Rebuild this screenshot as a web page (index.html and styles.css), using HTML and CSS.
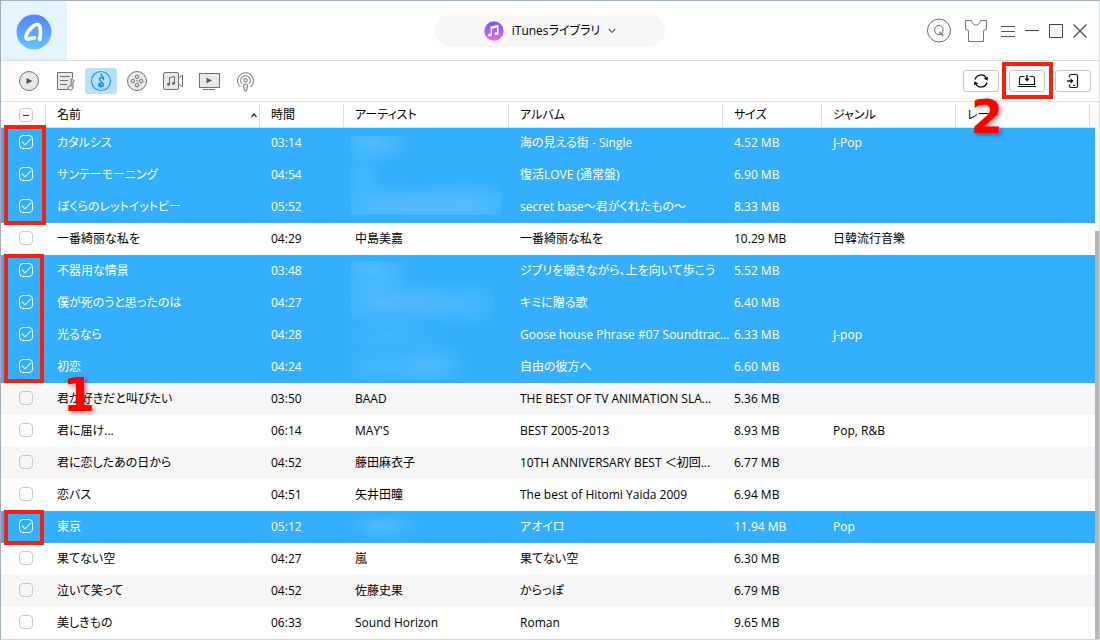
FILE: index.html
```html
<!DOCTYPE html>
<html lang="ja">
<head>
<meta charset="utf-8">
<title>iTunesライブラリ</title>
<link rel="stylesheet" href="styles.css">
</head>
<body>
<div class="app">
  <header class="topbar">
    <div class="brand">
      <svg width="36" height="36" viewBox="0 0 36 36" role="img" aria-label="AnyTrans">
        <defs><linearGradient id="brandFill" x1="0" y1="0" x2="0" y2="1"><stop offset="0" stop-color="#5684fc"/><stop offset="1" stop-color="#62c4fe"/></linearGradient></defs>
        <circle cx="18" cy="18" r="17.5" fill="url(#brandFill)"/>
        <path d="M23.800 25.500C24.800 19 24.700 14.500 23.600 12C22.500 9.800 20 10 17.400 12C14.200 14.600 11.200 18.600 10 22C9.400 24.400 10.600 25.400 12.800 25C14.800 24.600 16.500 23.800 18.500 23.900" fill="none" stroke="#fff" stroke-width="3.6" stroke-linecap="round" stroke-linejoin="round"/>
      </svg>
    </div>
    <button class="source" type="button">
      <svg width="20" height="20" viewBox="0 0 20 20" aria-hidden="true">
        <defs><linearGradient id="tuneFill" x1="0" y1="0" x2="0" y2="1"><stop offset="0" stop-color="#6a5cfb"/><stop offset="1" stop-color="#f062ee"/></linearGradient></defs>
        <circle cx="10" cy="10" r="9.7" fill="url(#tuneFill)"/>
        <path d="M7.3 13.8V6.2L13.8 4.8V12.4M7.3 7.2L13.8 5.8" fill="none" stroke="#fff" stroke-width="1.5"/>
        <ellipse cx="6" cy="14" rx="2" ry="1.6" fill="#fff"/><ellipse cx="12.5" cy="12.6" rx="2" ry="1.6" fill="#fff"/>
      </svg>
      <span>iTunesライブラリ</span>
      <svg width="8" height="6" viewBox="0 0 8 6" aria-hidden="true"><path d="M.8 1L4 4.3L7.2 1" fill="none" stroke="#666" stroke-width="1.2"/></svg>
    </button>
    <div class="controls">
      <button type="button" aria-label="アカウント"><svg width="26" height="26" viewBox="0 0 26 26"><g fill="none" stroke="#666"><circle cx="13" cy="12.500" r="11.5"/><ellipse cx="12.800" cy="12" rx="4.200" ry="4.700"/><path d="M13.500 14L17 18" stroke-width="1.200"/></g></svg></button>
      <button type="button" aria-label="スキン"><svg width="24" height="26" viewBox="0 0 24 26"><path d="M1.500 2.500H7.500Q8.500 7 12 7Q15.500 7 16.500 2.500H22.500V11.500L19.500 12.500V23.500H4.500V12.500L1.500 11.500Z" fill="none" stroke="#777"/></svg></button>
      <div class="window-buttons">
        <button type="button" aria-label="メニュー"><svg width="16" height="16" viewBox="0 0 16 16"><path d="M1 3.500H15M1 8.500H15M1 13.500H15" stroke="#555"/></svg></button>
        <button type="button" aria-label="最小化"><svg width="16" height="16" viewBox="0 0 16 16"><path d="M1 7.500H15" stroke="#444"/></svg></button>
        <button type="button" aria-label="最大化"><svg width="16" height="16" viewBox="0 0 16 16"><path d="M1.500 1.500H14.500V14.500H1.500Z" fill="none" stroke="#444"/></svg></button>
        <button type="button" aria-label="閉じる"><svg width="16" height="16" viewBox="0 0 16 16"><path d="M1.500 1.500L14.500 14.500M14.500 1.500L1.500 14.500" stroke="#444" stroke-width="1.200"/></svg></button>
      </div>
    </div>
  </header>

  <div class="toolbar">
    <nav class="kinds">
      <button type="button" aria-label="すべて"><svg width="24" height="24" viewBox="0 0 24 24"><circle cx="12" cy="12" r="9.500" class="shape"/><path d="M9.500 9L15.500 12L9.500 15Z" fill="#555"/></svg></button>
      <button type="button" aria-label="プレイリスト"><svg width="24" height="24" viewBox="0 0 24 24"><path d="M4.500 3.500H19.500V20.500H4.500Z" fill="#e8e8e8"/><path d="M19.500 9V3.500H4.500V20.500H15" class="line"/><path d="M7 7.500H17M7 11.500H15M7 15.500H14" class="line"/><path d="M18.200 9.500V17H17C15.500 17 15 18 15 19C15 20.500 16 21 17.500 21C19 21 20 20 20 18V12.500C22.500 12.500 21 10.500 18.200 9.500Z" class="shape"/></svg></button>
      <button type="button" class="active" aria-label="ミュージック"><svg width="24" height="24" viewBox="0 0 24 24"><circle cx="12" cy="12" r="9.500" fill="none" stroke="#1d9cf0" stroke-width="1.200"/><path d="M12 4.500C11.500 7.500 15 7 14.500 10C13 8.500 10.500 8 10.500 10C10.500 12 13.500 13 14 15.500" fill="none" stroke="#0f94f0" stroke-width="1.400"/><ellipse cx="12" cy="16" rx="3" ry="2.400" fill="#0f94f0"/><circle cx="12.800" cy="15.600" r=".8" fill="#b5e1fb"/></svg></button>
      <button type="button" aria-label="ムービー"><svg width="24" height="24" viewBox="0 0 24 24"><circle cx="12" cy="12" r="9.500" class="shape"/><g class="shape"><circle cx="12" cy="7.800" r="1.700"/><circle cx="12" cy="16.200" r="1.700"/><circle cx="7.800" cy="12" r="1.700"/><circle cx="16.200" cy="12" r="1.700"/></g><circle cx="12" cy="12" r=".7" fill="#666"/></svg></button>
      <button type="button" aria-label="ミュージックビデオ"><svg width="24" height="24" viewBox="0 0 24 24"><rect x="2.500" y="3.500" width="15" height="17" rx="1.500" class="shape"/><path d="M17.500 9.500L21.500 6V18L17.500 14.500" class="line"/><path d="M8.500 15V8.500L13.500 7.500V14" class="line"/><circle cx="7.500" cy="15.200" r="1.500" fill="#666"/><circle cx="12.500" cy="14.200" r="1.500" fill="#666"/></svg></button>
      <button type="button" aria-label="テレビ番組"><svg width="24" height="24" viewBox="0 0 24 24"><rect x="2.500" y="4.500" width="20" height="14" class="shape"/><path d="M9.500 8.800L15 11.500L9.500 14.200Z" fill="#555"/><path d="M6 20.500H18" class="line"/></svg></button>
      <button type="button" aria-label="ポッドキャスト"><svg width="24" height="24" viewBox="0 0 24 24"><path d="M7.500 18A8 8 0 1 1 17.500 18M9 14.800A4.800 4.800 0 1 1 16 14.800" class="line"/><circle cx="12.500" cy="11.300" r="1.800" class="shape"/><path d="M10.500 16.500C10.500 14.500 14.500 14.500 14.500 16.500L13.800 21C13.500 22.500 11.500 22.500 11.200 21Z" class="shape"/></svg></button>
    </nav>
    <div class="actions">
      <button type="button" aria-label="更新"><svg width="18" height="18" viewBox="0 0 18 18"><path d="M3 7.500A6.200 6.200 0 0 1 14.300 6M15 10.500A6.200 6.200 0 0 1 3.700 12" fill="none" stroke="#111" stroke-width="1.300"/><path d="M15.700 8.800L11.500 6.500L16 5ZM2.300 9.200L6.500 11.500L2 13Z" fill="#111"/></svg></button>
      <button type="button" aria-label="パソコンへ" class="marked"><svg width="18" height="18" viewBox="0 0 18 18"><path d="M6.500 4.500H3Q1.500 4.500 1.500 6V12.500H16.500V6Q16.500 4.500 15 4.500H11.500M0 14.500H18" fill="none" stroke="#111" stroke-width="1.200"/><path d="M9 3V8" stroke="#111" stroke-width="1.400"/><path d="M6.300 6.500H11.700L9 9.500Z" fill="#111"/></svg></button>
      <button type="button" aria-label="デバイスへ"><svg width="18" height="18" viewBox="0 0 18 18"><path d="M5.500 5.500V4Q5.500 2.500 7 2.500H12Q13.500 2.500 13.500 4V14Q13.500 15.500 12 15.500H7Q5.500 15.500 5.500 14V12.500M9 13.500H11" fill="none" stroke="#111" stroke-width="1.200"/><path d="M3 9H8" stroke="#111" stroke-width="1.400"/><path d="M6.500 6.300V11.700L9.500 9Z" fill="#111"/></svg></button>
    </div>
  </div>

  <main class="library">
    <table class="tracks">
      <colgroup><col class="c-check"><col class="c-name"><col class="c-time"><col class="c-artist"><col class="c-album"><col class="c-size"><col class="c-genre"><col><col class="c-end"></colgroup>
      <thead>
        <tr><th><input type="checkbox" class="mixed" aria-label="すべて選択"></th><th class="sorted">名前<svg width="8" height="6" viewBox="0 0 8 6" aria-hidden="true"><path d="M1.500 5L4 2L6.500 5" fill="none" stroke="#222" stroke-width="1.200"/></svg></th><th>時間</th><th>アーティスト</th><th>アルバム</th><th>サイズ</th><th>ジャンル</th><th>レート</th><th></th></tr>
      </thead>
      <tbody>
        <tr><td><input type="checkbox" checked aria-label="カタルシス"></td><td>カタルシス</td><td>03:14</td><td></td><td>海の見える街 - Single</td><td>4.52 MB</td><td>J-Pop</td><td></td><td></td></tr>
        <tr><td><input type="checkbox" checked aria-label="サンテーモーニング"></td><td>サンテーモーニング</td><td>04:54</td><td></td><td>復活LOVE (通常盤)</td><td>6.90 MB</td><td></td><td></td><td></td></tr>
        <tr><td><input type="checkbox" checked aria-label="ぼくらのレットイットビー"></td><td>ぼくらのレットイットビー</td><td>05:52</td><td></td><td>secret base～君がくれたもの～</td><td>8.33 MB</td><td></td><td></td><td></td></tr>
        <tr><td><input type="checkbox" aria-label="一番綺丽な私を"></td><td>一番綺丽な私を</td><td>04:29</td><td>中島美嘉</td><td>一番綺丽な私を</td><td>10.29 MB</td><td>日韓流行音樂</td><td></td><td></td></tr>
        <tr><td><input type="checkbox" checked aria-label="不器用な情景"></td><td>不器用な情景</td><td>03:48</td><td></td><td>ジブリを聴きながら、上を向いて歩こう</td><td>5.52 MB</td><td></td><td></td><td></td></tr>
        <tr><td><input type="checkbox" checked aria-label="僕が死のうと思ったのは"></td><td>僕が死のうと思ったのは</td><td>04:27</td><td></td><td>キミに贈る歌</td><td>6.40 MB</td><td></td><td></td><td></td></tr>
        <tr><td><input type="checkbox" checked aria-label="光るなら"></td><td>光るなら</td><td>04:28</td><td></td><td>Goose house Phrase #07 Soundtrac...</td><td>6.33 MB</td><td>J-pop</td><td></td><td></td></tr>
        <tr><td><input type="checkbox" checked aria-label="初恋"></td><td>初恋</td><td>04:24</td><td></td><td>自由の彼方へ</td><td>6.60 MB</td><td></td><td></td><td></td></tr>
        <tr><td><input type="checkbox" aria-label="君が好きだと叫びたい"></td><td>君が好きだと叫びたい</td><td>03:50</td><td>BAAD</td><td>THE BEST OF TV ANIMATION SLA...</td><td>5.36 MB</td><td></td><td></td><td></td></tr>
        <tr><td><input type="checkbox" aria-label="君に届け"></td><td>君に届け...</td><td>06:14</td><td>MAY'S</td><td>BEST 2005-2013</td><td>8.93 MB</td><td>Pop, R&amp;B</td><td></td><td></td></tr>
        <tr><td><input type="checkbox" aria-label="君に恋したあの日から"></td><td>君に恋したあの日から</td><td>04:52</td><td>藤田麻衣子</td><td>10TH ANNIVERSARY BEST ＜初回...</td><td>6.77 MB</td><td></td><td></td><td></td></tr>
        <tr><td><input type="checkbox" aria-label="恋バス"></td><td>恋バス</td><td>04:51</td><td>矢井田瞳</td><td>The best of Hitomi Yaida 2009</td><td>6.94 MB</td><td></td><td></td><td></td></tr>
        <tr><td><input type="checkbox" checked aria-label="東京"></td><td>東京</td><td>05:12</td><td></td><td>アオイロ</td><td>11.94 MB</td><td>Pop</td><td></td><td></td></tr>
        <tr><td><input type="checkbox" aria-label="果てない空"></td><td>果てない空</td><td>04:27</td><td>嵐</td><td>果てない空</td><td>6.30 MB</td><td></td><td></td><td></td></tr>
        <tr><td><input type="checkbox" aria-label="泣いて笑って"></td><td>泣いて笑って</td><td>04:52</td><td>佐藤史果</td><td>からっぽ</td><td>6.79 MB</td><td></td><td></td><td></td></tr>
        <tr><td><input type="checkbox" aria-label="美しきもの"></td><td>美しきもの</td><td>06:33</td><td>Sound Horizon</td><td>Roman</td><td>9.65 MB</td><td></td><td></td><td></td></tr>
      </tbody>
    </table>
    <div class="scroll"><div class="thumb"></div></div>
    <div class="veil veil-a"></div>
    <div class="veil veil-b"></div>
    <div class="veil veil-c"></div>
    <div class="mark mark-a"></div>
    <div class="mark mark-b"></div>
    <div class="mark mark-c"></div>
    <span class="step step-one">1</span>
    <span class="step step-two">2</span>
  </main>
</div>
</body>
</html>
```

FILE: styles.css
```css
* { box-sizing: border-box; }
body {
  margin: 0;
  font-family: "Open Sans", "Noto Sans CJK JP", sans-serif;
  font-size: 12px;
  line-height: 16px;
  font-feature-settings: "palt";
  color: #000;
  background: #fff;
}
button {
  font: inherit;
  font-feature-settings: inherit;
  color: inherit;
  border: 0;
  padding: 0;
  background: none;
  display: flex;
  align-items: center;
  justify-content: center;
}
.app {
  min-height: 100vh;
  display: flex;
  flex-direction: column;
  border: 1px solid #c5dceb;
  border-top-color: #9faeba;
  border-left-color: #9faeba;
}

.topbar {
  display: grid;
  grid-template-columns: 1fr auto 1fr;
  align-items: center;
  height: 60px;
  border-bottom: 1px solid #dfdfdf;
}
.brand {
  display: flex;
  align-items: center;
  justify-content: center;
  width: 66px;
  height: 59px;
  padding-top: 3px;
  background: #e5f3fd;
}
.source {
  width: 230px;
  height: 33px;
  gap: 8px;
  border-radius: 17px;
  background: #f7f7f7;
}
.controls {
  display: flex;
  align-items: center;
  justify-content: flex-end;
  gap: 12px;
  padding-right: 11px;
}
.window-buttons { display: flex; gap: 8px; }

.toolbar {
  display: flex;
  align-items: center;
  justify-content: space-between;
  height: 41px;
  padding: 0 8px 0 12px;
  border-bottom: 1px solid #dfdfdf;
}
.kinds { display: flex; gap: 4px; }
.kinds button { width: 32px; height: 26px; border-radius: 3px; }
.kinds .active { background: #b5e1fb; }
.shape { fill: #e8e8e8; stroke: #707070; }
.line { fill: none; stroke: #707070; }
.actions { display: flex; gap: 10px; }
.actions button {
  position: relative;
  width: 36px;
  height: 22px;
  border: 1px solid #c6c6c6;
  border-radius: 3px;
}
.actions .marked::after {
  content: "";
  position: absolute;
  inset: -9px -9px -8px -8px;
  border: 4px solid #f8200c;
}

.library { position: relative; flex: 1; display: flex; align-items: stretch; }
.tracks { flex: 1; width: 100%; table-layout: fixed; border-collapse: collapse; }
.c-check { width: 45px; }
.c-name { width: 214px; }
.c-time { width: 84px; }
.c-artist { width: 165px; }
.c-album { width: 214px; }
.c-size { width: 99px; }
.c-genre { width: 134px; }
.c-end { width: 5px; }
th, td {
  padding: 0 0 0 11px;
  text-align: left;
  font-weight: 400;
  white-space: nowrap;
}
th {
  height: 25px;
  padding-top: 2px;
  border-bottom: 1px solid #dfdfdf;
  background: linear-gradient(#dfdfdf, #dfdfdf) right bottom / 1px 23px no-repeat;
}
th:last-child { padding: 0; background: none; }
td { height: 32px; }
td:last-child { padding: 0; }
th:first-child, td:first-child { padding-left: 18px; }
td:first-child { padding-bottom: 2px; }
tbody tr:nth-child(odd) { background: #f6f6f6; }
tbody tr:has(input:checked) { background: #33affd; color: #fff; }
.sorted svg { float: right; margin: 5px 2px 0 0; }

input[type="checkbox"] {
  appearance: none;
  display: block;
  position: relative;
  width: 14px;
  height: 14px;
  margin: 0;
  border: 1px solid #c8c8c8;
  border-radius: 4px;
}
input[type="checkbox"]:checked { border-color: #fff; }
input[type="checkbox"]:checked::after {
  content: "";
  position: absolute;
  left: 2px;
  top: 2px;
  width: 8px;
  height: 4px;
  border-left: 1px solid #fff;
  border-bottom: 1px solid #fff;
  transform: rotate(-45deg);
}
.mixed::after {
  content: "";
  position: absolute;
  left: 3px;
  top: 6px;
  width: 6px;
  height: 1px;
  background: #333;
}

.scroll { width: 4px; padding-top: 129px; display: flex; background: #fafafa; }
.thumb { flex: 1; background: #b6b6b6; }

.veil { position: absolute; left: 350px; }
.veil-a {
  top: 34px;
  width: 150px;
  height: 79px;
  background:
    radial-gradient(ellipse 42px 24px at 22px 6px, #ffffff28, #fff0),
    radial-gradient(ellipse 22px 24px at 11px 40px, #ffffff18, #fff0),
    radial-gradient(ellipse 70px 24px at 35px 69px, #ffffff28, #fff0),
    radial-gradient(ellipse 75px 26px at 112px 69px, #ffffff2c, #fff0);
}
.veil-b {
  top: 159px;
  width: 142px;
  height: 119px;
  background:
    radial-gradient(ellipse 42px 26px at 22px 9px, #ffffff28, #fff0),
    radial-gradient(ellipse 70px 26px at 36px 41px, #ffffff28, #fff0),
    radial-gradient(ellipse 60px 24px at 110px 43px, #ffffff1c, #fff0),
    radial-gradient(ellipse 60px 22px at 38px 75px, #ffffff12, #fff0),
    radial-gradient(ellipse 55px 22px at 30px 106px, #ffffff16, #fff0),
    radial-gradient(ellipse 40px 26px at 80px 105px, #ffffff22, #fff0);
}
.veil-c {
  top: 412px;
  width: 80px;
  height: 26px;
  background: radial-gradient(ellipse 38px 14px at 32px 12px, #ffffff24, #fff0);
}
.mark { position: absolute; left: 3px; border: 4px solid #f8200c; }
.mark-a { top: 23px; width: 42px; height: 100px; }
.mark-b { top: 152px; width: 40px; height: 129px; }
.mark-c { top: 408px; width: 40px; height: 35px; }
.step {
  position: absolute;
  font: bold 46px/46px "DejaVu Sans", sans-serif;
  color: #f00;
  text-shadow: 2px 2px 4px #0006;
}
.step-one { left: 62px; top: 270px; }
.step-two { left: 970px; top: -8px; }
```
